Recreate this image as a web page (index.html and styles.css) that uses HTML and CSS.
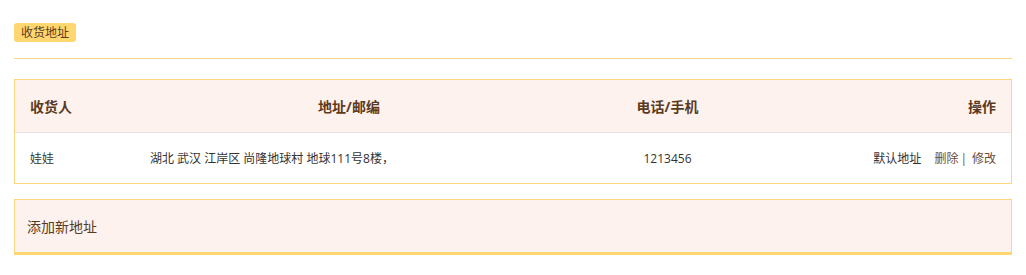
FILE: index.html
```html
<!DOCTYPE html>
<html lang="zh-CN">
<head>
<meta charset="utf-8">
<title>收货地址</title>
<link rel="stylesheet" href="styles.css">
</head>
<body>
<div class="page">
  <div class="title-bar">
    <span class="badge">收货地址</span>
  </div>
  <div class="addr-table">
    <div class="row head">
      <div class="cell c-name">收货人</div>
      <div class="cell c-addr">地址/邮编</div>
      <div class="cell c-phone">电话/手机</div>
      <div class="cell c-ops">操作</div>
    </div>
    <div class="row body">
      <div class="cell c-name">娃娃</div>
      <div class="cell c-addr">湖北 武汉 江岸区 尚隆地球村 地球111号8楼，</div>
      <div class="cell c-phone">1213456</div>
      <div class="cell c-ops">
        <span class="op-default">默认地址</span><span class="op-link">删除</span><span class="op-sep">|</span><span class="op-link">修改</span>
      </div>
    </div>
  </div>
  <div class="add-box">添加新地址</div>
</div>
</body>
</html>
```

FILE: styles.css
```css
* { box-sizing: border-box; }
html, body { margin: 0; padding: 0; background: #fff; }
body {
  font-family: "Open Sans", "Noto Sans CJK SC", "Liberation Sans", sans-serif;
  font-size: 12px;
  color: #333;
}
.page {
  padding: 23px 14px 0 14px;
}
.title-bar {
  padding-bottom: 16px;
  border-bottom: 1px solid #fdd77d;
  display: flex;
}
.badge {
  display: inline-block;
  height: 19px;
  line-height: 19px;
  padding: 0 7px;
  font-size: 12px;
  color: #5a3b1f;
  background: #ffd66f;
  border-radius: 3px;
}
.addr-table {
  margin-top: 20px;
  border: 1px solid #fcd680;
}
.row {
  display: grid;
  grid-template-columns: 120px 428px 209px 1fr;
  align-items: center;
}
.row.head {
  height: 53px;
  background: #fdf2ee;
  border-bottom: 1px solid #ebe3e0;
  font-size: 14px;
  font-weight: bold;
  color: #5b3a1e;
}
.row.body {
  height: 50px;
  color: #333;
}
.cell { white-space: nowrap; }
.c-name { padding-left: 15px; }
.head .c-addr { text-align: center; }
.body .c-addr { padding-left: 15px; }
.c-phone { text-align: center; }
.c-ops { text-align: right; padding-right: 15px; }
.op-default { color: #333; margin-right: 13px; }
.op-link { color: #6e4c38; }
.op-sep { color: #6e4c38; margin: 0 5px 0 2px; }
.add-box {
  margin-top: 15px;
  height: 56px;
  padding-left: 12px;
  display: flex;
  align-items: center;
  background: #fdf2ee;
  border: 1px solid #fcd680;
  border-bottom: 3px solid #ffd66f;
  font-size: 14px;
  color: #5a3a22;
}
```
